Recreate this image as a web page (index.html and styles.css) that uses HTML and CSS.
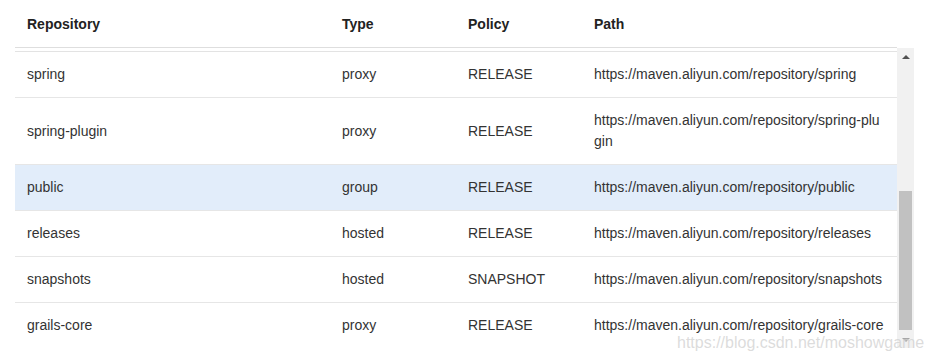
FILE: index.html
```html
<!DOCTYPE html>
<html lang="en">
<head>
    <meta charset="UTF-8">
    <title>Repositories</title>
    <link rel="stylesheet" href="styles.css">
</head>
<body>
    <div class="grid">
        <table class="head">
            <colgroup>
                <col class="c-name"><col class="c-type"><col class="c-policy"><col class="c-path">
            </colgroup>
            <tr>
                <th>Repository</th>
                <th>Type</th>
                <th>Policy</th>
                <th>Path</th>
            </tr>
        </table>

        <div class="body-wrap">
            <div class="body-scroll">
                <table class="rows">
                    <colgroup>
                        <col class="c-name"><col class="c-type"><col class="c-policy"><col class="c-path">
                    </colgroup>
                    <tr>
                        <td>spring</td><td>proxy</td><td>RELEASE</td>
                        <td>https://maven.aliyun.com/repository/spring</td>
                    </tr>
                    <tr>
                        <td>spring-plugin</td><td>proxy</td><td>RELEASE</td>
                        <td>https://maven.aliyun.com/repository/spring-plugin</td>
                    </tr>
                    <tr class="selected">
                        <td>public</td><td>group</td><td>RELEASE</td>
                        <td>https://maven.aliyun.com/repository/public</td>
                    </tr>
                    <tr>
                        <td>releases</td><td>hosted</td><td>RELEASE</td>
                        <td>https://maven.aliyun.com/repository/releases</td>
                    </tr>
                    <tr>
                        <td>snapshots</td><td>hosted</td><td>SNAPSHOT</td>
                        <td>https://maven.aliyun.com/repository/snapshots</td>
                    </tr>
                    <tr>
                        <td>grails-core</td><td>proxy</td><td>RELEASE</td>
                        <td>https://maven.aliyun.com/repository/grails-core</td>
                    </tr>
                </table>
            </div>

            <!-- fake scrollbar, scrolled to the bottom -->
            <div class="scrollbar">
                <div class="sb-btn"><span class="arrow up"></span></div>
                <div class="sb-track"><div class="sb-thumb"></div></div>
                <div class="sb-btn"><span class="arrow down"></span></div>
            </div>
        </div>
    </div>

    <div class="watermark">https://blog.csdn.net/moshowgame</div>
</body>
</html>
```

FILE: styles.css
```css
body {
    margin: 0;
    font-family: "Liberation Sans", Arial, sans-serif;
    font-size: 14px;
    color: #333;
    background: white;
}
.grid {
    padding-left: 15px;
    width: 899px;
}
table {
    border-collapse: collapse;
    table-layout: fixed;
    width: 882px;
}
.c-name { width: 315px; }
.c-type { width: 126px; }
.c-policy { width: 126px; }
.c-path { width: 315px; }
th, td {
    text-align: left;
    padding: 12px 12px;
    line-height: 21px;
    vertical-align: middle;
}
th {
    font-weight: bold;
    color: #222;
    padding-top: 14px;
    border-bottom: 1px solid #dedede;
}
td {
    border-bottom: 1px solid #e6e6e6;
    word-break: break-all;
}
.body-wrap {
    display: flex;
    height: 300px;
}
.body-scroll {
    width: 882px;
    overflow: hidden;
}
.rows {
    margin-top: 3px;
    border-top: 1px solid #e3e3e3;
}
.selected td {
    background: #e2edfa;
}
.scrollbar {
    width: 17px;
    display: flex;
    flex-direction: column;
    background: #f1f1f1;
}
.sb-btn {
    height: 17px;
    display: flex;
    align-items: center;
    justify-content: center;
}
.arrow {
    width: 0;
    height: 0;
    border-left: 4px solid transparent;
    border-right: 4px solid transparent;
}
.arrow.up {
    border-bottom: 4px solid #505050;
}
.arrow.down {
    border-top: 4px solid #a3a3a3;
}
.sb-track {
    flex: 1;
    padding: 126px 2px 0 2px;
}
.sb-thumb {
    height: 139px;
    background: #c1c1c1;
}
.watermark {
    position: absolute;
    left: 677px;
    top: 334px;
    font-size: 16px;
    color: rgba(190, 190, 190, 0.55);
    text-shadow: 0 0 1px rgba(255, 255, 255, 0.6);
}
```
